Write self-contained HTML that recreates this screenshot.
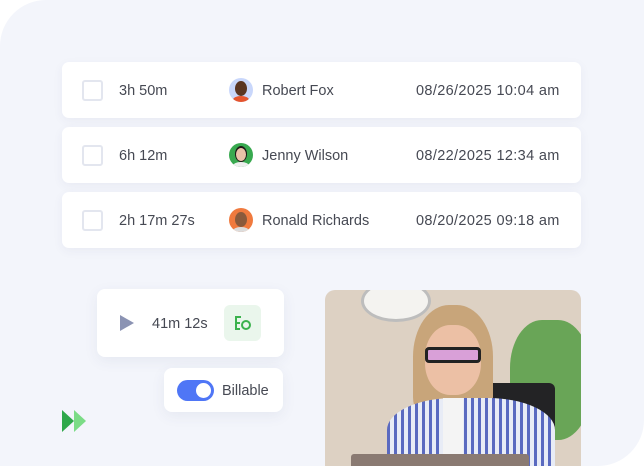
<!DOCTYPE html>
<html><head><style>
*{margin:0;padding:0;box-sizing:border-box}
body{width:644px;height:466px;background:#fff;font-family:"Liberation Sans",sans-serif;position:relative;overflow:hidden}
.bg{position:absolute;left:0;top:0;width:644px;height:466px;background:#f3f5fb;border-radius:46px 0 46px 0}
.row{position:absolute;left:62px;width:519px;height:56px;background:#fff;border-radius:7px;box-shadow:0 3px 10px rgba(60,70,120,.06);font-size:14.5px;color:#464953}
.row span{position:absolute;top:21px}
.row .d{letter-spacing:.35px}
.cb{position:absolute;left:20px;top:18px;width:21px;height:21px;border:2px solid #e3e6ef;border-radius:3px}
.av{position:absolute;left:167px;top:16px;width:24px;height:24px;border-radius:50%;overflow:hidden}
.card{position:absolute;background:#fff;border-radius:8px;box-shadow:0 4px 14px rgba(60,70,120,.07)}
</style></head><body>
<div class="bg"></div>
<div class="row" style="top:62px"><div class="cb"></div><span style="left:57px">3h 50m</span><div class="av" style="background:#c9d7fb"><div style="position:absolute;left:6px;top:3px;width:12px;height:15px;border-radius:50%;background:#5a3522"></div><div style="position:absolute;left:4px;top:18px;width:16px;height:8px;background:#e5542e;border-radius:50% 50% 0 0"></div></div><span style="left:200px">Robert Fox</span><span class="d" style="left:354px">08/26/2025 10:04 am</span></div>
<div class="row" style="top:127px"><div class="cb"></div><span style="left:57px">6h 12m</span><div class="av" style="background:#38a94f"><div style="position:absolute;left:6px;top:3px;width:12px;height:16px;border-radius:50%;background:#1e1a18"></div><div style="position:absolute;left:7px;top:5px;width:10px;height:13px;border-radius:50%;background:#e8c2a8"></div><div style="position:absolute;left:4px;top:19px;width:16px;height:8px;background:#eee;border-radius:50% 50% 0 0"></div></div><span style="left:200px">Jenny Wilson</span><span class="d" style="left:354px">08/22/2025 12:34 am</span></div>
<div class="row" style="top:192px"><div class="cb"></div><span style="left:57px">2h 17m 27s</span><div class="av" style="background:#f07a3e"><div style="position:absolute;left:6px;top:4px;width:12px;height:15px;border-radius:50%;background:#8a5a3c"></div><div style="position:absolute;left:4px;top:19px;width:16px;height:8px;background:#ddd;border-radius:50% 50% 0 0"></div></div><span style="left:200px">Ronald Richards</span><span class="d" style="left:354px">08/20/2025 09:18 am</span></div>

<div class="card" style="left:97px;top:289px;width:187px;height:68px">
<svg style="position:absolute;left:23px;top:26px" width="14" height="16"><path d="M0 0L14 8L0 16Z" fill="#8b93b3"/></svg>
<span style="position:absolute;left:55px;top:27px;font-size:14.5px;color:#464953">41m 12s</span>
<div style="position:absolute;left:127px;top:16px;width:37px;height:36px;background:#eaf6ec;border-radius:6px">
<svg style="position:absolute;left:10px;top:10px" width="18" height="16" fill="none" stroke="#3bb24d" stroke-width="2"><path d="M7 2H2V14H6M2 8H6"/><circle cx="12" cy="10" r="4"/></svg></div></div>

<div class="card" style="left:164px;top:368px;width:119px;height:44px">
<div style="position:absolute;left:13px;top:12px;width:37px;height:21px;border-radius:11px;background:#4f76f6"><div style="position:absolute;right:3px;top:3px;width:15px;height:15px;border-radius:50%;background:#fff"></div></div>
<span style="position:absolute;left:58px;top:15px;font-size:14.5px;color:#464953">Billable</span></div>

<svg style="position:absolute;left:61px;top:410px" width="26" height="22"><path d="M1 0L13 11L1 22Z" fill="#2ea84a"/><path d="M13 0L25 11L13 22Z" fill="#7bdc86"/></svg>

<div style="position:absolute;left:325px;top:290px;width:256px;height:176px;border-radius:10px 10px 0 0;overflow:hidden;background:#ddd1c3">
<div style="position:absolute;left:36px;top:-10px;width:70px;height:42px;border-radius:50%;background:#f4f3f0;border:3px solid #bdbdbd"></div>
<div style="position:absolute;left:185px;top:30px;width:80px;height:120px;border-radius:40%;background:#4c9a3c;opacity:.8"></div>
<div style="position:absolute;left:110px;top:93px;width:120px;height:90px;background:#232325;border-radius:6px"></div>
<div style="position:absolute;left:88px;top:15px;width:80px;height:115px;border-radius:45% 45% 20% 20%;background:#c8a57a"></div>
<div style="position:absolute;left:100px;top:35px;width:56px;height:70px;border-radius:45%;background:#ecc0a5"></div>
<div style="position:absolute;left:100px;top:57px;width:56px;height:16px;border:3px solid #222;border-radius:4px;background:#d9a0d8"></div>
<div style="position:absolute;left:62px;top:108px;width:168px;height:80px;border-radius:40% 40% 0 0;background:repeating-linear-gradient(90deg,#5a6ac0 0 3px,#e8ecf6 3px 7px)"></div>
<div style="position:absolute;left:118px;top:108px;width:20px;height:60px;background:#f4f4f4"></div>
<div style="position:absolute;left:26px;top:164px;width:178px;height:20px;background:#8a7a72;border-radius:3px"></div>
</div>
</body></html>
